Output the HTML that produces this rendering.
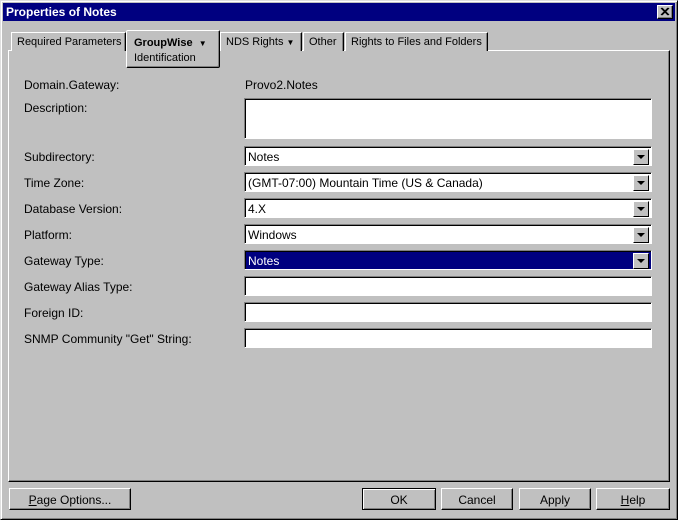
<!DOCTYPE html><html><head><style>
*{margin:0;padding:0;box-sizing:border-box}
body{width:678px;height:520px;background:#c0c0c0;font-family:"Liberation Sans",Arial,sans-serif;font-size:12px;position:relative;overflow:hidden}
.a{position:absolute}
.win{left:0;top:0;width:678px;height:520px;border:1px solid;border-color:#dfdfdf #000 #000 #dfdfdf;box-shadow:inset 1px 1px #fff,inset -1px -1px #808080}
.title{left:3px;top:3px;width:672px;height:18px;background:#000080;color:#fff;font-weight:bold;font-size:12px;padding:2px 3px}
.close{left:657px;top:5px;width:16px;height:14px;background:#c0c0c0;border:1px solid;border-color:#fff #000 #000 #fff;box-shadow:inset -1px -1px #808080}
.panel{left:8px;top:50px;width:662px;height:432px;border:1px solid;border-color:#fff #000 #000 #fff;box-shadow:inset -1px -1px #808080}
.tab{top:32px;height:19px;border:1px solid;border-bottom:none;border-color:#fff #000 #000 #fff;box-shadow:inset -1px 0 #808080;padding:3px 0 0 5px;font-size:11px;background:#c0c0c0;white-space:nowrap;overflow:hidden}
.lbl{left:24px;font-size:12px;white-space:nowrap}
.f{left:244px;width:408px;height:20px;background:#fff;border:1px solid;border-color:#808080 #fff #fff #808080;box-shadow:inset 1px 1px #000;padding:3px 3px;font-size:12px;line-height:14px}
.dd{position:absolute;right:2px;top:2px;width:16px;height:16px;background:#c0c0c0;border:1px solid;border-color:#fff #000 #000 #fff}
.dd:after{content:"";position:absolute;left:3px;top:5px;border-left:4px solid transparent;border-right:4px solid transparent;border-top:4px solid #000}
.btn{top:488px;height:22px;border:1px solid;border-color:#fff #000 #000 #fff;box-shadow:inset -1px -1px #808080;text-align:center;font-size:12px;padding-top:4px}
</style></head><body>
<div class="a win"></div>
<div class="a title">Properties of Notes</div>
<div class="a close"><svg width="14" height="12" style="position:absolute;left:0;top:0"><path d="M3 2L10 9M4 2L11 9M10 2L3 9M11 2L4 9" stroke="#000" stroke-width="1.2"/></svg></div>
<div class="a panel"></div>
<div class="a tab" style="left:11px;width:115px">Required Parameters</div>
<div class="a tab" style="left:220px;width:82px">NDS Rights <span style="font-size:8px">▼</span></div>
<div class="a tab" style="left:303px;width:41px">Other</div>
<div class="a tab" style="left:345px;width:143px">Rights to Files and Folders</div>
<div class="a" style="left:126px;top:30px;width:94px;height:38px;background:#c0c0c0;border:1px solid;border-color:#fff #000 #000 #fff;box-shadow:inset -1px -1px #808080;border-radius:2px;padding:5px 0 0 7px;font-size:11px;line-height:15px;white-space:nowrap"><b>GroupWise</b> &nbsp;<span style="font-size:8px">▼</span><br>Identification</div>
<div class="a lbl" style="top:78px">Domain.Gateway:</div>
<div class="a" style="left:245px;top:78px;font-size:12px">Provo2.Notes</div>
<div class="a lbl" style="top:101px">Description:</div>
<div class="a f" style="top:98px;height:41px"></div>
<div class="a lbl" style="top:150px">Subdirectory:</div>
<div class="a f" style="top:146px">Notes<div class="dd"></div></div>
<div class="a lbl" style="top:176px">Time Zone:</div>
<div class="a f" style="top:172px">(GMT-07:00) Mountain Time (US &amp; Canada)<div class="dd"></div></div>
<div class="a lbl" style="top:202px">Database Version:</div>
<div class="a f" style="top:198px">4.X<div class="dd"></div></div>
<div class="a lbl" style="top:228px">Platform:</div>
<div class="a f" style="top:224px">Windows<div class="dd"></div></div>
<div class="a lbl" style="top:254px">Gateway Type:</div>
<div class="a f" style="top:250px;background:#000080;color:#fff">Notes<div class="dd"></div></div>
<div class="a lbl" style="top:280px">Gateway Alias Type:</div>
<div class="a f" style="top:276px"></div>
<div class="a lbl" style="top:306px">Foreign ID:</div>
<div class="a f" style="top:302px"></div>
<div class="a lbl" style="top:332px">SNMP Community "Get" String:</div>
<div class="a f" style="top:328px"></div>
<div class="a btn" style="left:9px;width:122px"><u>P</u>age Options...</div>
<div class="a btn" style="left:362px;width:74px;border:1px solid #000;box-shadow:inset 1px 1px #fff,inset -1px -1px #808080">OK</div>
<div class="a btn" style="left:441px;width:72px">Cancel</div>
<div class="a btn" style="left:519px;width:72px">Apply</div>
<div class="a btn" style="left:596px;width:74px"><u>H</u>elp</div>
</body></html>
